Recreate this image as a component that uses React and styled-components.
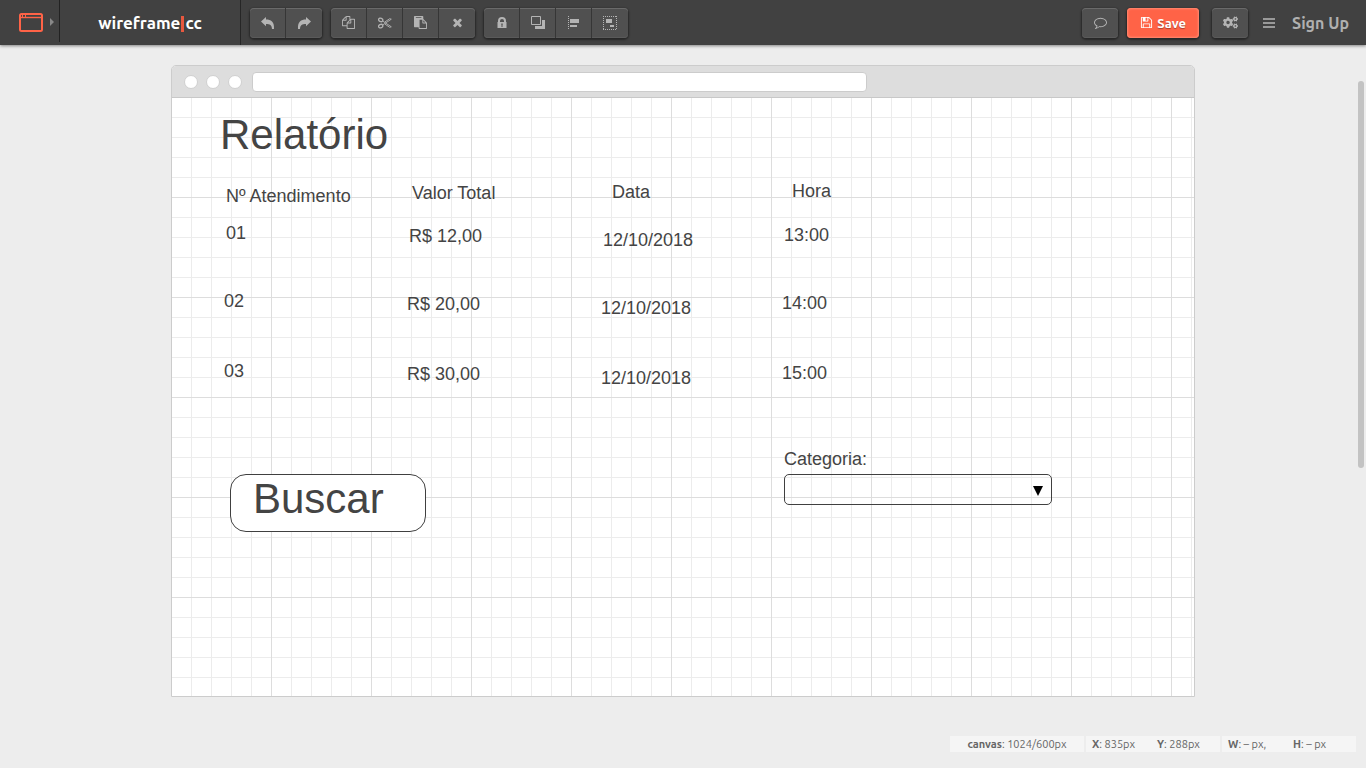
import React from 'react';
import styled, { createGlobalStyle, css } from 'styled-components';
import { FaCogs } from 'react-icons/fa';

const GlobalStyle = createGlobalStyle`
  *, *::before, *::after { box-sizing: border-box; }
  body {
    margin: 0;
    background: #ededed;
    color: #444;
    font-family: Ubuntu, "Noto Sans", sans-serif;
  }
  button, select { font: inherit; color: inherit; }
`;

const Page = styled.div`
  position: relative;
  display: flex;
  flex-direction: column;
  min-height: 100vh;
`;

const Header = styled.header`
  display: flex;
  align-items: center;
  height: 45px;
  background: #414141;
  box-shadow: 0 1px 3px rgba(0, 0, 0, 0.45);
`;

const DeviceButton = styled.button`
  display: flex;
  align-items: center;
  gap: 7px;
  width: 60px;
  height: 42px;
  margin-bottom: 3px;
  padding: 2px 0 0 19px;
  border: 0;
  border-right: 1px solid #222;
  background: none;
`;

const Logo = styled.a`
  display: flex;
  align-items: center;
  justify-content: center;
  width: 181px;
  height: 45px;
  border-right: 1px solid #262626;
  color: #fff;
  font-size: 17px;
  font-weight: 700;
  text-decoration: none;
`;

const Cursor = styled.span`
  width: 3px;
  height: 16px;
  margin: 2px 1px 0;
  background: #e8583f;
`;

const Tools = styled.div`
  display: flex;
  gap: 9px;
  margin-left: 9px;
`;

const ButtonGroup = styled.div`
  display: flex;
  border-radius: 4px;
  box-shadow: 0 1px 2px 1px rgba(0, 0, 0, 0.4);
`;

const raised = css`
  display: flex;
  align-items: center;
  justify-content: center;
  height: 30px;
  padding: 0;
  border: 0;
  background: #505050;
  color: #b4b4b4;
  box-shadow: inset 0 1px 0 #6a6a6a, inset 0 -1px 0 #5a5a5a;
`;

const ToolButton = styled.button`
  ${raised}
  width: 36px;
  border-right: 1px solid #363636;
  &:first-child { border-radius: 4px 0 0 4px; }
  &:last-child { border-radius: 0 4px 4px 0; border-right: 0; }
`;

const SingleButton = styled.button`
  ${raised}
  width: 36px;
  border-radius: 4px;
  box-shadow: inset 0 1px 0 #6a6a6a, inset 0 -1px 0 #5a5a5a, 0 1px 2px 1px rgba(0, 0, 0, 0.4);
`;

const SaveButton = styled(SingleButton)`
  gap: 4px;
  width: 72px;
  margin: 0 13px 0 9px;
  background: #ff6347;
  color: #fff;
  font-size: 13px;
  font-weight: 700;
  text-shadow: 0 1px 1px rgba(0, 0, 0, 0.35);
  box-shadow: inset 0 0 2px 1px #ff8a72, 0 1px 2px 1px rgba(0, 0, 0, 0.4);
`;

const Account = styled.div`
  display: flex;
  align-items: center;
  margin-left: auto;
  padding-right: 17px;
`;

const MenuButton = styled.button`
  display: flex;
  margin: 0 17px 0 15px;
  padding: 0;
  border: 0;
  background: none;
  color: #999;
`;

const SignUp = styled.a`
  color: #b0b0b0;
  font-size: 16px;
  font-weight: 700;
  text-decoration: none;
`;

const Workspace = styled.main`
  display: flex;
  justify-content: center;
  padding: 20px 16px;
`;

const Browser = styled.section`
  flex: 0 1 1024px;
  border: 1px solid #ccc;
  border-radius: 5px 5px 0 0;
  background: #fff;
`;

const BrowserBar = styled.div`
  display: flex;
  align-items: center;
  gap: 8px;
  height: 32px;
  padding-left: 12px;
  border-bottom: 1px solid #c8c8c8;
  border-radius: 4px 4px 0 0;
  background: #ddd;
`;

const Dot = styled.span`
  width: 14px;
  height: 14px;
  border: 1px solid #d0d0d0;
  border-radius: 50%;
  background: #fff;
`;

const Address = styled.div`
  flex: 0 1 615px;
  height: 20px;
  margin-left: 2px;
  border: 1px solid #ccc;
  border-radius: 4px;
  background: #fff;
`;

const Canvas = styled.div`
  position: relative;
  height: 598px;
  font-family: "Liberation Sans", Arial, sans-serif;
  background-image:
    linear-gradient(to right, transparent 99px, #ddd 99px),
    linear-gradient(to bottom, transparent 99px, #ddd 99px),
    linear-gradient(to right, transparent 19px, #ececec 19px),
    linear-gradient(to bottom, transparent 19px, #ececec 19px);
  background-size: 100px 100px, 100px 100px, 20px 20px, 20px 20px;
`;

/* Elements dropped on the drawing canvas keep the coordinates they were given. */
const placed = css`
  position: absolute;
  left: ${(p) => p.$x}px;
  top: ${(p) => p.$y}px;
`;

const Title = styled.h1`
  ${placed}
  margin: 0;
  font-size: 42px;
  line-height: 48px;
  font-weight: 400;
`;

const Label = styled.span`
  ${placed}
  font-size: 18px;
  line-height: 20px;
  white-space: nowrap;
`;

const SearchButton = styled.button`
  ${placed}
  width: 196px;
  height: 58px;
  padding: 0 0 8px 22px;
  border: 1px solid #404040;
  border-radius: 16px;
  background: #fff;
  font-size: 42px;
  line-height: 48px;
  text-align: left;
`;

const SelectBox = styled.div`
  ${placed}
  width: 268px;
  height: 31px;
`;

const Select = styled.select`
  width: 100%;
  height: 100%;
  border: 1px solid #404040;
  border-radius: 5px;
  background: none;
  appearance: none;
`;

const SelectArrow = styled.svg`
  position: absolute;
  right: 9px;
  top: 12px;
  pointer-events: none;
`;

const StatusBar = styled.footer`
  display: flex;
  justify-content: flex-end;
  gap: 2px;
  margin: auto 10px 16px 0;
  color: #666;
  font-size: 11px;
  line-height: 16px;
`;

const StatusCell = styled.div`
  display: flex;
  justify-content: ${(p) => (p.$center ? 'center' : 'flex-start')};
  width: 134px;
  padding: 0 6px;
  background: #f5f5f5;
`;

const Reading = styled.span`
  width: ${(p) => (p.$wide ? '65px' : 'auto')};
  white-space: nowrap;
`;

const ScrollThumb = styled.div`
  position: absolute;
  top: 81px;
  right: 2px;
  width: 6px;
  height: 387px;
  border-radius: 3px;
  background: #c3c3c3;
`;

const faPaths = {
  copy: 'M1696 384q40 0 68 28t28 68v1216q0 40-28 68t-68 28h-960q-40 0-68-28t-28-68v-288h-544q-40 0-68-28t-28-68v-672q0-40 20-88t48-76l408-408q28-28 76-48t88-20h416q40 0 68 28t28 68v328q68-40 128-40h416zm-544 213l-299 299h299v-299zm-640-384l-299 299h299v-299zm196 647l316-316v-416h-384v416q0 40-28 68t-68 28h-416v640h512v-256q0-40 20-88t48-76zm956 804v-1152h-384v416q0 40-28 68t-68 28h-416v640h896z',
  paste: 'M768 1664h896v-640h-416q-40 0-68-28t-28-68v-416h-384v1152zm256-1440v-64q0-13-9.5-22.5t-22.5-9.5h-704q-13 0-22.5 9.5t-9.5 22.5v64q0 13 9.5 22.5t22.5 9.5h704q13 0 22.5-9.5t9.5-22.5zm256 672h299l-299-299v299zm512 128v672q0 40-28 68t-68 28h-960q-40 0-68-28t-28-68v-160h-544q-40 0-68-28t-28-68v-1344q0-40 28-68t68-28h1088q40 0 68 28t28 68v328q21 13 36 28l408 408q28 28 48 76t20 88z',
  remove: 'M1490 1322q0 40-28 68l-136 136q-28 28-68 28t-68-28l-294-294-294 294q-28 28-68 28t-68-28l-136-136q-28-28-28-68t28-68l294-294-294-294q-28-28-28-68t28-68l136-136q28-28 68-28t68 28l294 294 294-294q28-28 68-28t68 28l136 136q28 28 28 68t-28 68l-294 294 294 294q28 28 28 68z',
  comment: 'M896 384q-204 0-381.5 69.5t-282 187.5-104.5 255q0 112 71.5 213.5t201.5 175.5l87 50-27 96q-24 91-70 172 152-63 275-171l43-38 57 6q69 8 130 8 204 0 381.5-69.5t282-187.5 104.5-255-104.5-255-282-187.5-381.5-69.5zm896 512q0 174-120 321.5t-326 233-450 85.5q-70 0-145-8-198 175-460 242-49 14-114 22h-5q-15 0-27-10.5t-16-27.5v-1q-3-4-.5-12t2-10 4.5-9.5l6-9 7-8.5 8-9q7-8 31-34.5t34.5-38 31-39.5 32.5-51 27-59 26-76q-157-89-247.5-220t-90.5-281q0-130 71-248.5t191-204.5 286-136.5 348-50.5 348 50.5 286 136.5 191 204.5 71 248.5z',
  save: 'M512 1536h768v-384h-768v384zm896 0h128v-896q0-14-10-38.5t-20-34.5l-281-281q-10-10-34-20t-39-10v416q0 40-28 68t-68 28h-576q-40 0-68-28t-28-68v-416h-128v1280h128v-416q0-40 28-68t68-28h832q40 0 68 28t28 68v416zm-384-928v-320q0-13-9.5-22.5t-22.5-9.5h-192q-13 0-22.5 9.5t-9.5 22.5v320q0 13 9.5 22.5t22.5 9.5h192q13 0 22.5-9.5t9.5-22.5zm640 32v928q0 40-28 68t-68 28h-1344q-40 0-68-28t-28-68v-1344q0-40 28-68t68-28h928q40 0 88 20t76 48l280 280q28 28 48 76t20 88z',
};

const Solid = ({ name, size = 13 }) => (
  <svg width={size} height={size} viewBox="0 0 1792 1792" fill="currentColor" aria-hidden="true">
    <path d={faPaths[name]} />
  </svg>
);

const Arrow = ({ flip }) => (
  <svg width="14" height="12" viewBox="0 0 14 12" fill="currentColor" aria-hidden="true">
    <path transform={flip ? 'translate(14 0) scale(-1 1)' : undefined} d="M0 4.5 5 0v2.6c5 0 8.4 2 8 9.4h-2c-.2-3.800-2-5-6-5v2.300z" />
  </svg>
);

const Scissors = () => (
  <svg width="14" height="12" viewBox="0 0 14 12" fill="none" stroke="currentColor" aria-hidden="true">
    <ellipse cx="2.700" cy="2.900" rx="2.200" ry="1.700" transform="rotate(25 2.700 2.900)" strokeWidth="1.300" />
    <ellipse cx="2.700" cy="9.100" rx="2.200" ry="1.700" transform="rotate(-25 2.700 9.100)" strokeWidth="1.300" />
    <path d="M4.600 4 13.300 9.800l-1.600.5L6.800 7M4.600 8l8.700-5.800-1.600-.5L6.800 5" strokeWidth="0.900" />
  </svg>
);

const Lock = () => (
  <svg width="10" height="12" viewBox="0 0 10 12" fill="currentColor" aria-hidden="true">
    <path fillRule="evenodd" d="M1 5V4a4 4 0 0 1 8 0v1h.5v6H.5V5zm2 0h4V4a2 2 0 0 0-4 0zm1.300 1.500v1.300l.2.400V10h1V8.200l.2-.4V6.500z" />
  </svg>
);

const Arrange = () => (
  <svg width="14" height="13" viewBox="0 0 14 13" aria-hidden="true">
    <path d="M11 4h3v9H4v-3h7z" fill="currentColor" />
    <path d="M.5.5h9v8h-9z" fill="none" stroke="currentColor" />
  </svg>
);

const Align = () => (
  <svg width="12" height="13" viewBox="0 0 12 13" fill="currentColor" aria-hidden="true">
    <path d="M.5 0v13" stroke="currentColor" strokeDasharray="1 1" />
    <path d="M2 3h9v4H2zM2 9h7v2H2z" />
  </svg>
);

const Group = () => (
  <svg width="14" height="14" viewBox="0 0 14 14" fill="currentColor" aria-hidden="true">
    <path d="M0 .5h14M0 13.5h14M.5 0v14M13.500 0v14" stroke="currentColor" strokeDasharray="1 1" />
    <path d="M3 3h6v4H3zM7 9h4v2H7z" />
  </svg>
);

const toolGroups = [
  [['Undo', <Arrow />], ['Redo', <Arrow flip />]],
  [['Copy', <Solid name="copy" />], ['Cut', <Scissors />], ['Paste', <Solid name="paste" />], ['Delete', <Solid name="remove" />]],
  [['Lock', <Lock />], ['Arrange', <Arrange />], ['Align', <Align />], ['Group', <Group />]],
];

const labels = [
  ['Nº Atendimento', 54, 88], ['Valor Total', 240, 85], ['Data', 440, 84], ['Hora', 620, 83],
  ['01', 54, 125], ['R$ 12,00', 237, 128], ['12/10/2018', 431, 132], ['13:00', 612, 127],
  ['02', 52, 193], ['R$ 20,00', 235, 196], ['12/10/2018', 429, 200], ['14:00', 610, 195],
  ['03', 52, 263], ['R$ 30,00', 235, 266], ['12/10/2018', 429, 270], ['15:00', 610, 265],
];

export default function App() {
  return (
    <Page>
      <GlobalStyle />
      <Header>
        <DeviceButton aria-label="Choose device">
          <svg width="24" height="19" viewBox="0 0 24 19" fill="none" stroke="#ff6347" aria-hidden="true">
            <rect x="1" y="1" width="22" height="17" rx="1.500" strokeWidth="2" />
            <path d="M1 4.500h22" strokeWidth="1.400" />
            <path d="M3.500 2v2M6.500 2v2" />
          </svg>
          <svg width="4" height="8" viewBox="0 0 4 8" fill="#888" aria-hidden="true"><path d="M0 0l4 4-4 4z" /></svg>
        </DeviceButton>
        <Logo href="#home">wireframe<Cursor />cc</Logo>
        <Tools>
          {toolGroups.map((group) => (
            <ButtonGroup key={group[0][0]}>
              {group.map(([name, icon]) => (
                <ToolButton key={name} aria-label={name}>{icon}</ToolButton>
              ))}
            </ButtonGroup>
          ))}
        </Tools>
        <Account>
          <SingleButton aria-label="Comments"><Solid name="comment" /></SingleButton>
          <SaveButton><Solid name="save" />Save</SaveButton>
          <SingleButton aria-label="Settings"><FaCogs size={15} /></SingleButton>
          <MenuButton aria-label="Menu">
            <svg width="12" height="10" viewBox="0 0 12 10" fill="currentColor" aria-hidden="true">
              <path d="M0 0h12v2H0zM0 4h12v2H0zM0 8h12v2H0z" />
            </svg>
          </MenuButton>
          <SignUp href="#signup">Sign Up</SignUp>
        </Account>
      </Header>
      <Workspace>
        <Browser>
          <BrowserBar><Dot /><Dot /><Dot /><Address /></BrowserBar>
          <Canvas>
            <Title $x={48} $y={13}>Relatório</Title>
            {labels.map(([text, x, y]) => (
              <Label key={`${x}-${y}`} $x={x} $y={y}>{text}</Label>
            ))}
            <SearchButton $x={58} $y={376}>Buscar</SearchButton>
            <Label as="label" htmlFor="categoria" $x={612} $y={351}>Categoria:</Label>
            <SelectBox $x={612} $y={376}>
              <Select id="categoria" defaultValue=""><option value="" /></Select>
              <SelectArrow width="10" height="10" viewBox="0 0 10 10" aria-hidden="true"><path d="M0 0h10L5 10z" fill="#000" /></SelectArrow>
            </SelectBox>
          </Canvas>
        </Browser>
      </Workspace>
      <StatusBar>
        <StatusCell $center><Reading><b>canvas</b>: 1024/600px</Reading></StatusCell>
        <StatusCell><Reading $wide><b>X</b>: 835px</Reading><Reading><b>Y</b>: 288px</Reading></StatusCell>
        <StatusCell><Reading $wide><b>W</b>: – px,</Reading><Reading><b>H</b>: – px</Reading></StatusCell>
      </StatusBar>
      <ScrollThumb />
    </Page>
  );
}
